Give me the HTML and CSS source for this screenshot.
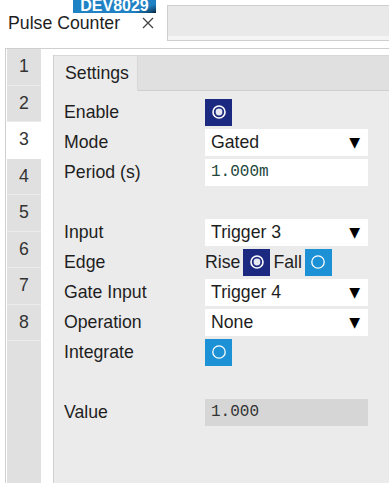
FILE: index.html
```html
<!DOCTYPE html>
<html lang="en">
  <head>
    <meta charset="UTF-8" />
    <meta name="viewport" content="width=device-width, initial-scale=1" />
    <title>Pulse Counter</title>
    <link rel="stylesheet" href="styles.css">
  </head>
  <body>
    <div class="badge">DEV8029</div>

    <div class="tabbar">
      <div class="tab">
        Pulse Counter
        <svg class="close" width="12" height="12" viewBox="0 0 12 12">
          <path d="M1 1 L11 11 M11 1 L1 11" stroke="#444" stroke-width="1.3" fill="none" />
        </svg>
      </div>
      <div class="tab-fill"></div>
    </div>

    <div class="main">
      <div class="channels">
        <div class="ch">1</div>
        <div class="ch">2</div>
        <div class="ch active">3</div>
        <div class="ch">4</div>
        <div class="ch">5</div>
        <div class="ch">6</div>
        <div class="ch">7</div>
        <div class="ch">8</div>
      </div>

      <div class="panel">
        <div class="subtabs">
          <div class="subtab">Settings</div>
        </div>

        <div class="form">
          <div class="row">
            <span class="label">Enable</span>
            <div class="ctl">
              <span class="radio on">
                <svg width="16" height="16" viewBox="0 0 16 16">
                  <circle cx="8" cy="8" r="6" stroke="#fff" stroke-width="1.6" fill="none" />
                  <circle cx="8" cy="8" r="3.4" fill="#e6e8f2" />
                </svg>
              </span>
            </div>
          </div>
          <div class="row">
            <span class="label">Mode</span>
            <div class="select">Gated <span class="arrow">▼</span></div>
          </div>
          <div class="row">
            <span class="label">Period (s)</span>
            <div class="field">1.000m</div>
          </div>

          <div class="row"></div>

          <div class="row">
            <span class="label">Input</span>
            <div class="select">Trigger 3 <span class="arrow">▼</span></div>
          </div>
          <div class="row">
            <span class="label">Edge</span>
            <div class="ctl">
              Rise
              <span class="radio on">
                <svg width="16" height="16" viewBox="0 0 16 16">
                  <circle cx="8" cy="8" r="6" stroke="#fff" stroke-width="1.6" fill="none" />
                  <circle cx="8" cy="8" r="3.4" fill="#e6e8f2" />
                </svg>
              </span>
              Fall
              <span class="radio">
                <svg width="16" height="16" viewBox="0 0 16 16">
                  <circle cx="8" cy="8" r="6.2" stroke="#fff" stroke-width="1.3" fill="none" />
                </svg>
              </span>
            </div>
          </div>
          <div class="row">
            <span class="label">Gate Input</span>
            <div class="select">Trigger 4 <span class="arrow">▼</span></div>
          </div>
          <div class="row">
            <span class="label">Operation</span>
            <div class="select">None <span class="arrow">▼</span></div>
          </div>
          <div class="row">
            <span class="label">Integrate</span>
            <div class="ctl">
              <span class="radio">
                <svg width="16" height="16" viewBox="0 0 16 16">
                  <circle cx="8" cy="8" r="6.2" stroke="#fff" stroke-width="1.3" fill="none" />
                </svg>
              </span>
            </div>
          </div>

          <div class="row"></div>

          <div class="row">
            <span class="label">Value</span>
            <div class="field readonly">1.000</div>
          </div>
        </div>
      </div>
    </div>
  </body>
</html>
```

FILE: styles.css
```css
* {
  box-sizing: border-box;
  margin: 0;
  padding: 0;
}
body {
  font-family: "Liberation Sans", Arial, sans-serif;
  font-size: 17.7px;
  color: #1e1e1e;
  background: #fff;
  display: flex;
  flex-direction: column;
  min-height: 100vh;
  overflow: hidden;
}
.badge {
  position: absolute;
  left: 73px;
  top: 0;
  width: 83px;
  height: 13px;
  overflow: hidden;
  background: linear-gradient(160deg, #1f82c4 78%, #0f4e7a 92%, #081e30 100%);
  color: #fff;
  font-weight: bold;
  font-size: 16px;
  line-height: 11px;
  text-align: center;
  z-index: 2;
}
.tabbar {
  display: flex;
  height: 36px;
  margin-top: 5px;
}
.tab {
  width: 167px;
  display: flex;
  align-items: center;
  padding-left: 8px;
  background: #fff;
  white-space: nowrap;
}
.close {
  margin-left: 22px;
}
.tab-fill {
  flex: 1;
  background: #e9e9e9;
  border: 1px solid #cfcfcf;
  border-right: none;
  box-shadow: inset 0 -4px 0 #f4f4f4;
}
.main {
  flex: 1;
  display: flex;
  margin-top: 7px;
  margin-left: 5px;
  border-top: 1px solid #cfcfcf;
  border-left: 1px solid #cfcfcf;
  padding-left: 1px;
}
.channels {
  width: 34px;
  background: #e0e0e0;
  margin-right: 12px;
}
.ch {
  height: 36.5px;
  line-height: 35px;
  text-align: center;
  color: #333;
  border-bottom: 1px solid #ebebeb;
}
.ch.active {
  background: #fff;
  border-bottom-color: #fff;
}
.panel {
  flex: 1;
  margin-top: 6px;
  background: #ebebeb;
  border-left: 1px solid #cfcfcf;
}
.subtabs {
  height: 36px;
  background: #e0e0e0;
  border-top: 1px solid #d8d8d8;
  border-bottom: 1px solid #cfcfcf;
}
.subtab {
  width: 84px;
  height: 35px;
  line-height: 34px;
  padding-left: 11px;
  background: #ebebeb;
  border-right: 1px solid #d8d8d8;
}
.form {
  padding: 6px 0 0 10px;
}
.row {
  display: grid;
  grid-template-columns: 141px 163px;
  align-items: center;
  height: 30px;
}
.label {
  white-space: nowrap;
}
.ctl {
  display: flex;
  align-items: center;
  gap: 3px;
  white-space: nowrap;
}
.radio {
  width: 27px;
  height: 27px;
  display: flex;
  align-items: center;
  justify-content: center;
  background: #1d91d6;
}
.radio.on {
  background: #1b2a80;
}
.select {
  height: 27px;
  background: #fff;
  display: flex;
  align-items: center;
  justify-content: space-between;
  padding: 0 8px 0 6px;
}
.arrow {
  font-family: "DejaVu Sans", sans-serif;
  font-size: 14px;
  color: #000;
}
.field {
  height: 27px;
  background: #fff;
  display: flex;
  align-items: center;
  padding-left: 6px;
  font-family: "Liberation Mono", "Courier New", monospace;
  font-size: 16px;
  color: #22463a;
}
.field.readonly {
  background: #d6d6d6;
  color: #333;
}
```
